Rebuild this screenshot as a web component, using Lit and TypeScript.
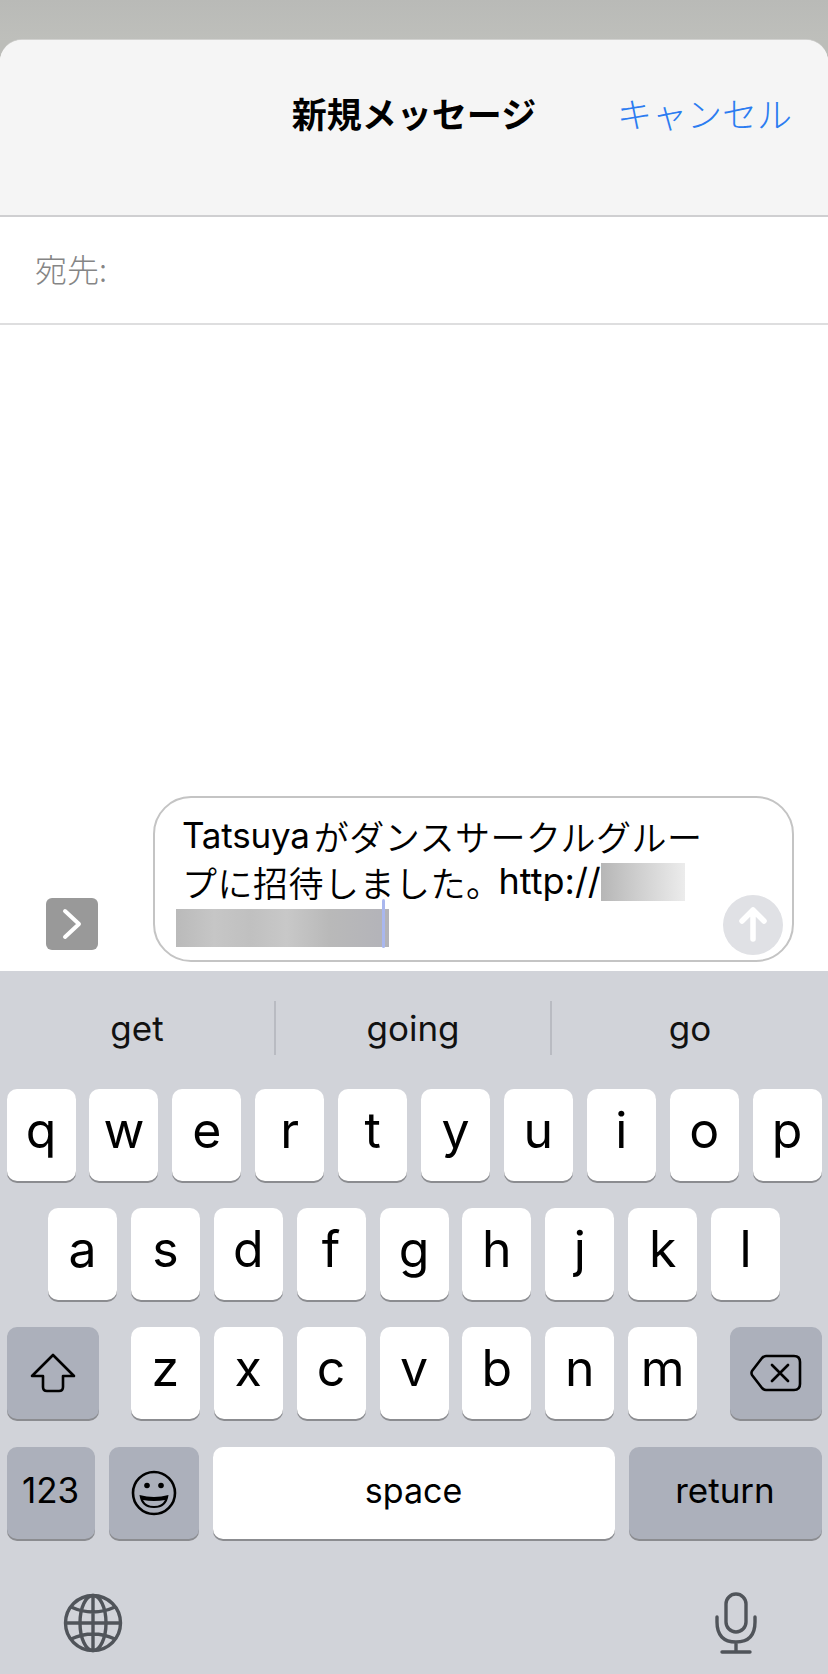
import { LitElement, html, css, svg } from "lit";
import { customElement } from "lit/decorators.js";

const ROW1 = ["q", "w", "e", "r", "t", "y", "u", "i", "o", "p"];
const ROW2 = ["a", "s", "d", "f", "g", "h", "j", "k", "l"];
const ROW3 = ["z", "x", "c", "v", "b", "n", "m"];

@customElement("app-root")
export class AppRoot extends LitElement {
  static styles = css`
    :host { display: block; width: 828px; height: 1674px; overflow: hidden; background: #bcbdb9;
      font-family: Inter, "Noto Sans CJK JP", sans-serif; color: #000; }
    * { box-sizing: border-box; }
    .page { display: flex; flex-direction: column; height: 1674px; }
    .backdrop { height: 40px; flex: none; background: linear-gradient(#b9bab7, #bebfbb); }
    .sheet { flex: 1; display: flex; flex-direction: column; min-height: 0; background: #fff;
      border-radius: 22px 22px 0 0; overflow: hidden; box-shadow: 0 -1px 0 #d2d2d0; }
    .header { height: 177px; flex: none; background: #f5f5f5; border-bottom: 2px solid #cfcfd1;
      display: grid; grid-template-columns: 1fr auto 1fr; padding: 45px 36px 0 36px; align-items: start;
      font-family: "Noto Sans CJK JP", sans-serif; font-size: 35px; line-height: 56px; }
    .title { font-weight: 700; grid-column: 2; white-space: nowrap; }
    .cancel { grid-column: 3; justify-self: end; color: #2b7cf1; font-weight: 300; white-space: nowrap; }
    .to { height: 108px; flex: none; border-bottom: 2px solid #dededf; padding: 0 0 4px 35px; display: flex; align-items: center;
      font-family: "Noto Sans CJK JP", sans-serif; font-size: 32px; font-weight: 300; color: #858585; }
    .compose { flex: 1; display: flex; align-items: flex-end; padding: 0 34px 9px 46px; min-height: 0; }
    .apps { width: 52px; height: 52px; flex: none; border-radius: 6px; background: #999; margin: 0 55px 12px 0;
      display: flex; align-items: center; justify-content: center; }
    .bubble { flex: 1; height: 166px; border: 2px solid #c4c4c4; border-radius: 38px; position: relative; padding: 16px 0 0 27px; }
    .line { height: 43px; display: flex; align-items: center; white-space: nowrap; line-height: 43px; }
    .line.second { margin-top: 3px; }
    .latin { font-family: Inter, sans-serif; font-size: 35px; font-weight: 380; letter-spacing: -0.2px; margin-right: 4px; }
    .http { font-family: Inter, sans-serif; font-size: 36px; font-weight: 380; letter-spacing: 0; margin-left: -3px; }
    .jp { font-family: "Noto Sans CJK JP", sans-serif; font-weight: 350; font-size: 35px; letter-spacing: 0.5px; }
    .blur1 { width: 84px; height: 38px; margin-left: 0; background: linear-gradient(90deg, #b6b6b6, #cfcfcf 45%, #ececec); }
    .blur2 { width: 213px; height: 38px; margin-left: -6px; margin-top: 6px; background: linear-gradient(90deg, #bababa, #c6c6c6 18%, #c0c0c0 35%, #c8c8c8 52%, #b9b9b9 72%, #b3b3b9); }
    .cursor { position: absolute; left: 227px; top: 101px; width: 3px; height: 49px; background: #a9b7ee; border-radius: 2px; }
    .send { position: absolute; right: 9px; bottom: 5px; width: 60px; height: 60px; border-radius: 50%; background: #e0e1e5;
      display: flex; align-items: center; justify-content: center; }
    .keyboard { height: 703px; flex: none; background: #d1d3d9; display: flex; flex-direction: column; }
    .suggest { height: 118px; flex: none; display: grid; grid-template-columns: 1fr 1fr 1fr; align-items: center; padding: 0 0 4px; font-size: 35px; font-weight: 380; color: #111; }
    .sg { height: 54px; display: flex; align-items: center; justify-content: center; border-right: 2px solid #b9bbc2; }
    .sg:last-child { border-right: 0; }
    .rows { display: flex; flex-direction: column; gap: 25px; padding: 0 6.5px; }
    .row { display: flex; height: 94px; }
    .row.mid { justify-content: center; gap: 13.9px; }
    .row.split { justify-content: space-between; }
    .group { display: flex; gap: 13.9px; }
    .row.last { margin-top: 1px; gap: 14px; }
    .key { height: 92px; border-radius: 10px; background: #fff; box-shadow: 0 2px 0 #8b8c90; display: flex; align-items: center; justify-content: center; }
    .letter { width: 69px; flex: none; font-size: 50px; font-weight: 380; line-height: 60px; padding-bottom: 11px; }
    .fn { background: #acb0bb; }
    .wide { width: 92px; flex: none; }
    .num { width: 88px; flex: none; font-size: 35px; font-weight: 380; }
    .emoji { width: 90px; flex: none; }
    .space { flex: 1; font-size: 34px; font-weight: 380; }
    .ret { width: 193px; flex: none; font-size: 35px; font-weight: 380; }
    .label { padding-bottom: 6px; }
    .bottom { flex: 1; display: flex; justify-content: space-between; padding: 52px 71px 0 63px; align-items: flex-start; }
    svg { display: block; }
  `;

  private letter(k: string) { return html`<div class="key letter">${k}</div>`; }

  render() {
    return html`<div class="page">
      <div class="backdrop"></div>
      <div class="sheet">
        <div class="header"><div class="title">新規メッセージ</div><div class="cancel">キャンセル</div></div>
        <div class="to">宛先:</div>
        <div class="compose">
          <div class="apps">${svg`<svg width="26" height="36" viewBox="0 0 26 36"><path d="M6 5 L20 18 L6 31" fill="none" stroke="#fff" stroke-width="4" stroke-linecap="round" stroke-linejoin="round"/></svg>`}</div>
          <div class="bubble">
            <div class="line"><span class="latin">Tatsuya</span><span class="jp">がダンスサークルグルー</span></div>
            <div class="line second"><span class="jp">プに招待しました。</span><span class="http">http://</span><span class="blur1"></span></div>
            <div class="line"><span class="blur2"></span></div>
            <div class="cursor"></div>
            <div class="send">${svg`<svg width="36" height="44" viewBox="0 0 36 44"><path d="M18 36 V7 M7 18 L18 7 L29 18" fill="none" stroke="#fff" stroke-width="5.5" stroke-linecap="round" stroke-linejoin="round"/></svg>`}</div>
          </div>
        </div>
        <div class="keyboard">
          <div class="suggest"><div class="sg">get</div><div class="sg">going</div><div class="sg">go</div></div>
          <div class="rows">
            <div class="row mid">${ROW1.map((k) => this.letter(k))}</div>
            <div class="row mid">${ROW2.map((k) => this.letter(k))}</div>
            <div class="row split">
              <div class="key fn wide">${svg`<svg width="46" height="40" viewBox="0 0 46 40"><path d="M23 2 L44 23 H33 V34 Q33 38 29 38 H17 Q13 38 13 34 V23 H2 Z" fill="none" stroke="#000" stroke-width="2.6" stroke-linejoin="round"/></svg>`}</div>
              <div class="group">${ROW3.map((k) => this.letter(k))}</div>
              <div class="key fn wide">${svg`<svg width="52" height="38" viewBox="0 0 52 38"><path d="M16 2 H44 Q50 2 50 8 V30 Q50 36 44 36 H16 Q14 36 12 34 L2 21 Q1 19 2 17 L12 4 Q14 2 16 2 Z M22 11 L38 27 M38 11 L22 27" fill="none" stroke="#000" stroke-width="2.6" stroke-linejoin="round" stroke-linecap="round"/></svg>`}</div>
            </div>
            <div class="row last">
              <div class="key fn num"><span class="label">123</span></div>
              <div class="key fn emoji">${svg`<svg width="46" height="46" viewBox="0 0 46 46"><circle cx="23" cy="23" r="21" fill="none" stroke="#000" stroke-width="2.6"/><circle cx="16" cy="15.5" r="2.8"/><circle cx="30" cy="15.5" r="2.8"/><path d="M8.5 25 Q23 29 37.5 25 Q36 38 23 38 Q10 38 8.5 25 Z"/><path d="M12 30 Q23 32 34 30 Q31 36 23 36 Q15 36 12 30 Z" fill="#acb0bb"/></svg>`}</div>
              <div class="key space"><span class="label">space</span></div>
              <div class="key fn ret"><span class="label">return</span></div>
            </div>
          </div>
          <div class="bottom">
            ${svg`<svg width="60" height="60" viewBox="0 0 60 60" fill="none" stroke="#50545a" stroke-width="3.4"><circle cx="30" cy="30" r="27.5"/><ellipse cx="30" cy="30" rx="13" ry="27.5"/><path d="M30 2.5 V57.5 M2.5 30 H57.5 M8 14 Q30 24 52 14 M8 46 Q30 36 52 46"/></svg>`}
            ${svg`<svg width="42" height="62" viewBox="0 0 42 62" fill="none" stroke="#50545a" stroke-width="3.4" stroke-linecap="round" style="margin-top:-1px"><rect x="11" y="2" width="20" height="38" rx="10"/><path d="M2 25 V30 Q2 50 21 50 Q40 50 40 30 V25 M21 50 V60 M7 60 H35"/></svg>`}
          </div>
        </div>
      </div>
    </div>`;
  }
}
